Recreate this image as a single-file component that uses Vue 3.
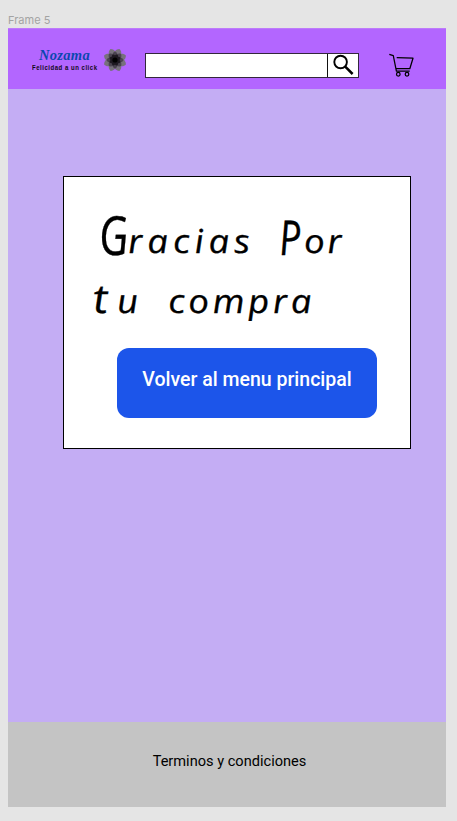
<script setup>
const petals = [0, 45, 90, 135, 180, 225, 270, 315]
const rings = [
  { scale: 1, turn: 22.5, fill: '#77717c' },
  { scale: 0.72, turn: 0, fill: '#4a434f' },
  { scale: 0.5, turn: 22.5, fill: '#1d1820' },
]
</script>

<template>
  <div class="canvas">
    <div class="frame-label">Frame 5</div>
    <div class="frame">
      <header class="header">
        <div class="brand">
          <div class="brand-name">Nozama</div>
          <div class="tagline">Felicidad a un click</div>
        </div>
        <svg class="flower" viewBox="-12 -12 24 24">
          <g v-for="ring in rings" :key="ring.scale" :transform="`rotate(${ring.turn}) scale(${ring.scale})`" :fill="ring.fill">
            <path v-for="a in petals" :key="a" :transform="`rotate(${a})`" d="M0 0L-3.6-7C-3.4-9.5-2-11 0-11.8C2-11 3.4-9.5 3.6-7Z" />
          </g>
          <circle r="2.6" fill="#000" />
        </svg>
        <div class="search">
          <div class="search-input"></div>
          <div class="search-button">
            <svg viewBox="0 0 22 22" width="22" height="22" fill="none" stroke="#000">
              <circle cx="7.6" cy="8" r="6.3" stroke-width="1.9" />
              <path d="M12 12.4L19.6 20" stroke-width="2.5" />
            </svg>
          </div>
        </div>
        <svg class="cart" viewBox="0 0 25 25" fill="none" stroke="#000" stroke-width="1.25" stroke-linejoin="round">
          <path d="M.3 1.3L4.3 2.7L7.4 18.2H20.7M7.7 4.7L24 5.2L20.8 15.7H7" />
          <circle cx="9.3" cy="21.2" r="1.8" />
          <circle cx="18" cy="21.2" r="1.8" />
        </svg>
      </header>
      <main class="main">
        <section class="card">
          <h1 class="thanks">
            <span class="line first"><span class="word gracias"><span class="big">G</span>racias</span> <span class="word por"><span class="cap">P</span>or</span></span>
            <span class="line second"><span class="word tu"><span class="tee">t</span>u</span> <span class="word compra">compra</span></span>
          </h1>
          <button class="back">Volver al menu principal</button>
        </section>
      </main>
      <footer class="footer">Terminos y condiciones</footer>
    </div>
  </div>
</template>

<style>
body { background: #e5e5e5; }
</style>

<style scoped>
.canvas {
  box-sizing: border-box;
  width: 457px;
  height: 821px;
  padding: 13px 11px 14px 8px;
  background: #e5e5e5;
  font-family: Roboto, sans-serif;
  overflow: hidden;
}
.frame-label {
  height: 15px;
  font: 11px/15px Inter, sans-serif;
  color: #a3a3a3;
}
.frame {
  display: flex;
  flex-direction: column;
  width: 438px;
  height: 779px;
  background: #c4adf4;
}
.header {
  display: flex;
  box-sizing: border-box;
  height: 61px;
  padding-left: 24px;
  background: #b366ff;
  border-top: 1px solid #bd7bfa;
}
.brand {
  width: 66px;
  padding-top: 18px;
  white-space: nowrap;
}
.brand-name {
  height: 16px;
  padding-left: 7px;
  font: italic bold 14.5px/16px "Liberation Serif", serif;
  letter-spacing: 0.3px;
  color: #0b47ae;
}
.tagline {
  width: 90px;
  font: bold 8px/9px "Liberation Sans", sans-serif;
  letter-spacing: 0.7px;
  color: #120818;
  transform: scaleX(0.75);
  transform-origin: left;
}
.flower {
  width: 24px;
  height: 24px;
  margin: 19px 0 0 5px;
}
.search {
  display: flex;
  box-sizing: border-box;
  width: 214px;
  height: 25px;
  margin: 24px 0 0 18px;
  border: 1px solid #33263d;
  background: #fff;
}
.search-input { width: 181px; }
.search-button {
  width: 30px;
  border-left: 1px solid #111;
}
.search-button svg {
  display: block;
  margin: 0 0 0 5px;
}
.cart {
  width: 25px;
  height: 25px;
  margin: 24px 0 0 30px;
}
.main { flex: 1; padding: 87px 0 0 55px; }
.card {
  box-sizing: border-box;
  width: 348px;
  height: 273px;
  border: 1px solid #000;
  background: #fff;
}
.thanks {
  height: 171px;
  margin: 0;
  font: italic 400 33px/60px "Open Sans", sans-serif;
  color: #000;
  -webkit-text-stroke: 0.3px #000;
}
.line {
  display: flex;
  align-items: baseline;
  height: 60px;
  white-space: nowrap;
}
.first { padding: 34px 0 0 36px; }
.second { padding-left: 30px; }
.word {
  display: block;
  transform: skewX(5deg) scaleX(1.12);
  transform-origin: 0 70%;
}
.big, .cap {
  display: inline-block;
  line-height: 0;
  letter-spacing: 0;
  transform: translateY(2px) scaleX(0.72);
  transform-origin: 0 50%;
}
.big { margin-right: -11px; font-size: 54px; }
.cap { margin-right: -5px; font-size: 48px; }
.gracias { width: 180px; letter-spacing: 4.2px; }
.por { letter-spacing: 2px; }
.tee { font-size: 40px; line-height: 0; }
.tu { width: 75px; letter-spacing: 8px; }
.compra { letter-spacing: 3px; }
.back {
  display: block;
  width: 260px;
  height: 70px;
  margin: 0 0 0 53px;
  padding: 0 0 7px;
  border: 0;
  border-radius: 12px;
  background: #1c55ea;
  color: #fff;
  font: 500 19.5px/24px Roboto, sans-serif;
}
.footer {
  height: 85px;
  background: #c4c4c4;
  font-size: 14.6px;
  line-height: 78px;
  text-align: center;
  text-indent: 5px;
  color: #000;
}
</style>
